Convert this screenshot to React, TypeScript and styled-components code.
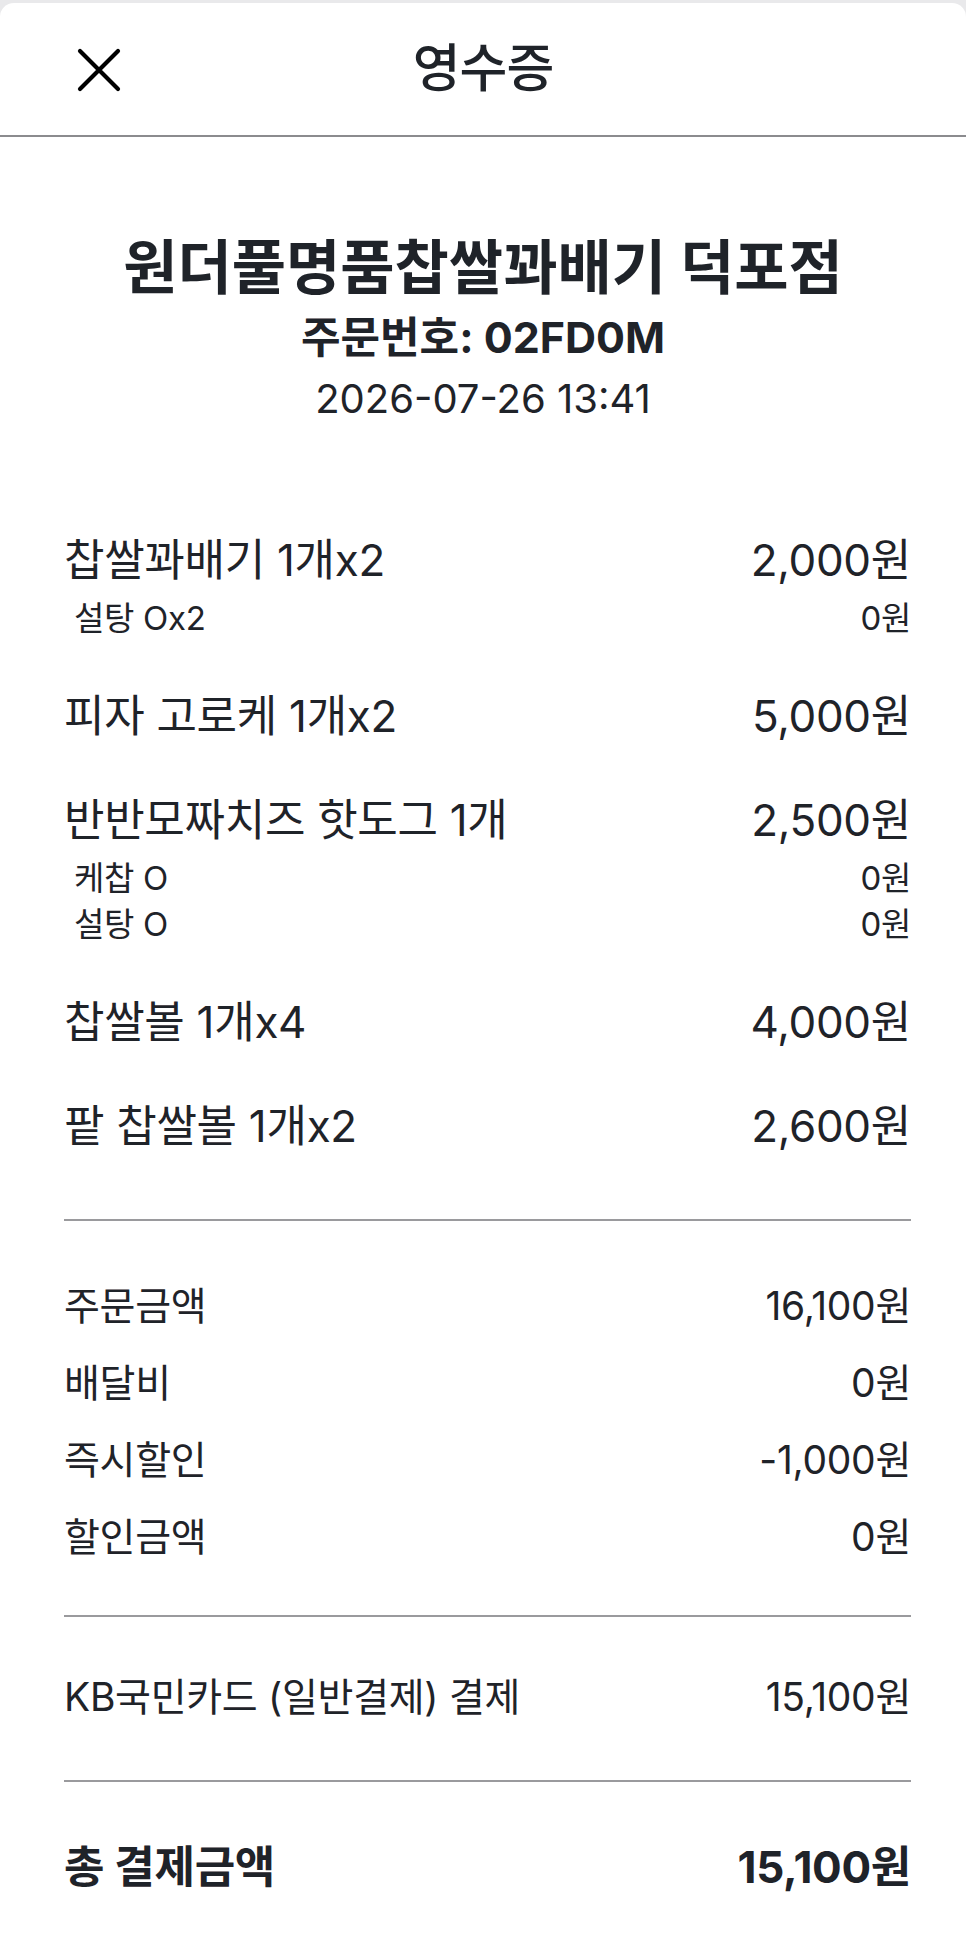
import React from "react"
import styled, { createGlobalStyle } from "styled-components"

const GlobalStyle = createGlobalStyle`
	html, body {
		margin: 0;
		padding: 0;
		background: #e9e9eb;
	}
	body {
		font-family: "Inter", "Noto Sans CJK KR", "Noto Sans", sans-serif;
		color: #1f2329;
		-webkit-font-smoothing: antialiased;
	}
`

const Sheet = styled.div`
	margin-top: 3px;
	min-height: calc(100vh - 3px);
	background: #ffffff;
	border-radius: 14px 14px 0 0;
	overflow: hidden;
`

const Header = styled.header`
	height: 132px;
	border-bottom: 2px solid #8b8b8e;
	display: grid;
	grid-template-columns: 1fr auto 1fr;
	align-items: center;
`

const CloseButton = styled.button`
	justify-self: start;
	margin-left: 75px;
	margin-top: 2px;
	width: 48px;
	height: 48px;
	padding: 0;
	border: none;
	background: none;
	display: flex;
	align-items: center;
	justify-content: center;
	cursor: pointer;
`

const HeaderTitle = styled.h1`
	margin: 0;
	font-size: 52px;
	font-weight: 500;
	letter-spacing: -1px;
	line-height: 1;
	color: #1f2329;
`

const Intro = styled.section`
	display: flex;
	flex-direction: column;
	align-items: center;
	padding-top: 96px;
`

const StoreName = styled.h2`
	margin: 0;
	font-size: 59px;
	line-height: 70px;
	font-weight: 700;
	letter-spacing: 0;
`

const OrderNo = styled.div`
	margin-top: 8px;
	font-size: 43px;
	line-height: 52px;
	font-weight: 700;
	letter-spacing: 0;
`

const OrderDate = styled.div`
	margin-top: 12px;
	font-size: 40px;
	line-height: 48px;
	font-weight: 400;
	letter-spacing: 0;
`

const Body = styled.div`
	padding: 0 55px 0 64px;
`

const ItemList = styled.div`
	margin-top: 104px;
	padding-bottom: 66px;
	display: flex;
	flex-direction: column;
	gap: 44px;
	border-bottom: 2px solid #9a9a9d;
`

const ItemGroup = styled.div`
	display: flex;
	flex-direction: column;
`

const Row = styled.div<{ $size: number; $height: number; $bold?: boolean; $indent?: number }>`
	display: flex;
	justify-content: space-between;
	align-items: center;
	height: ${(p) => p.$height}px;
	padding-left: ${(p) => p.$indent ?? 0}px;
	font-size: ${(p) => p.$size}px;
	font-weight: ${(p) => (p.$bold ? 700 : 400)};
	letter-spacing: -0.3px;
	white-space: nowrap;
`

const Options = styled.div`
	margin-top: 6px;
	display: flex;
	flex-direction: column;
`

const Section = styled.div<{ $top?: number; $bottom?: number; $last?: boolean }>`
	padding: ${(p) => p.$top ?? 43}px 0 ${(p) => p.$bottom ?? 43}px;
	border-bottom: ${(p) => (p.$last ? "none" : "2px solid #9a9a9d")};
`

type Item = {
	name: string
	price: string
	options?: { name: string; price: string }[]
}

const items: Item[] = [
	{ name: "찹쌀꽈배기 1개x2", price: "2,000원", options: [{ name: "설탕 Ox2", price: "0원" }] },
	{ name: "피자 고로케 1개x2", price: "5,000원" },
	{
		name: "반반모짜치즈 핫도그 1개",
		price: "2,500원",
		options: [
			{ name: "케찹 O", price: "0원" },
			{ name: "설탕 O", price: "0원" },
		],
	},
	{ name: "찹쌀볼 1개x4", price: "4,000원" },
	{ name: "팥 찹쌀볼 1개x2", price: "2,600원" },
]

const summary = [
	["주문금액", "16,100원"],
	["배달비", "0원"],
	["즉시할인", "-1,000원"],
	["할인금액", "0원"],
]

const CloseIcon = () => (
	<svg width="46" height="46" viewBox="0 0 46 46" fill="none">
		<path d="M4 4 L42 42 M42 4 L4 42" stroke="#000" strokeWidth="4.2" strokeLinecap="round" />
	</svg>
)

const App = () => {
	return (
		<>
			<GlobalStyle />
			<Sheet>
				<Header>
					<CloseButton aria-label="닫기">
						<CloseIcon />
					</CloseButton>
					<HeaderTitle>영수증</HeaderTitle>
					<div />
				</Header>

				<Intro>
					<StoreName>원더풀명품찹쌀꽈배기 덕포점</StoreName>
					<OrderNo>주문번호: 02FD0M</OrderNo>
					<OrderDate>2026-07-26 13:41</OrderDate>
				</Intro>

				<Body>
					<ItemList>
						{items.map((item) => (
							<ItemGroup key={item.name}>
								<Row $size={44} $height={60}>
									<span>{item.name}</span>
									<span>{item.price}</span>
								</Row>
								{item.options && (
									<Options>
										{item.options.map((opt) => (
											<Row key={opt.name} $size={33} $height={46} $indent={10}>
												<span>{opt.name}</span>
												<span>{opt.price}</span>
											</Row>
										))}
									</Options>
								)}
							</ItemGroup>
						))}
					</ItemList>

					<Section>
						{summary.map(([label, value]) => (
							<Row key={label} $size={39} $height={77}>
								<span>{label}</span>
								<span>{value}</span>
							</Row>
						))}
					</Section>

					<Section $top={38} $bottom={48}>
						<Row $size={39} $height={77}>
							<span>KB국민카드 (일반결제) 결제</span>
							<span>15,100원</span>
						</Row>
					</Section>

					<Section $last>
						<Row $size={44} $height={77} $bold>
							<span>총 결제금액</span>
							<span>15,100원</span>
						</Row>
					</Section>
				</Body>
			</Sheet>
		</>
	)
}

export default App
